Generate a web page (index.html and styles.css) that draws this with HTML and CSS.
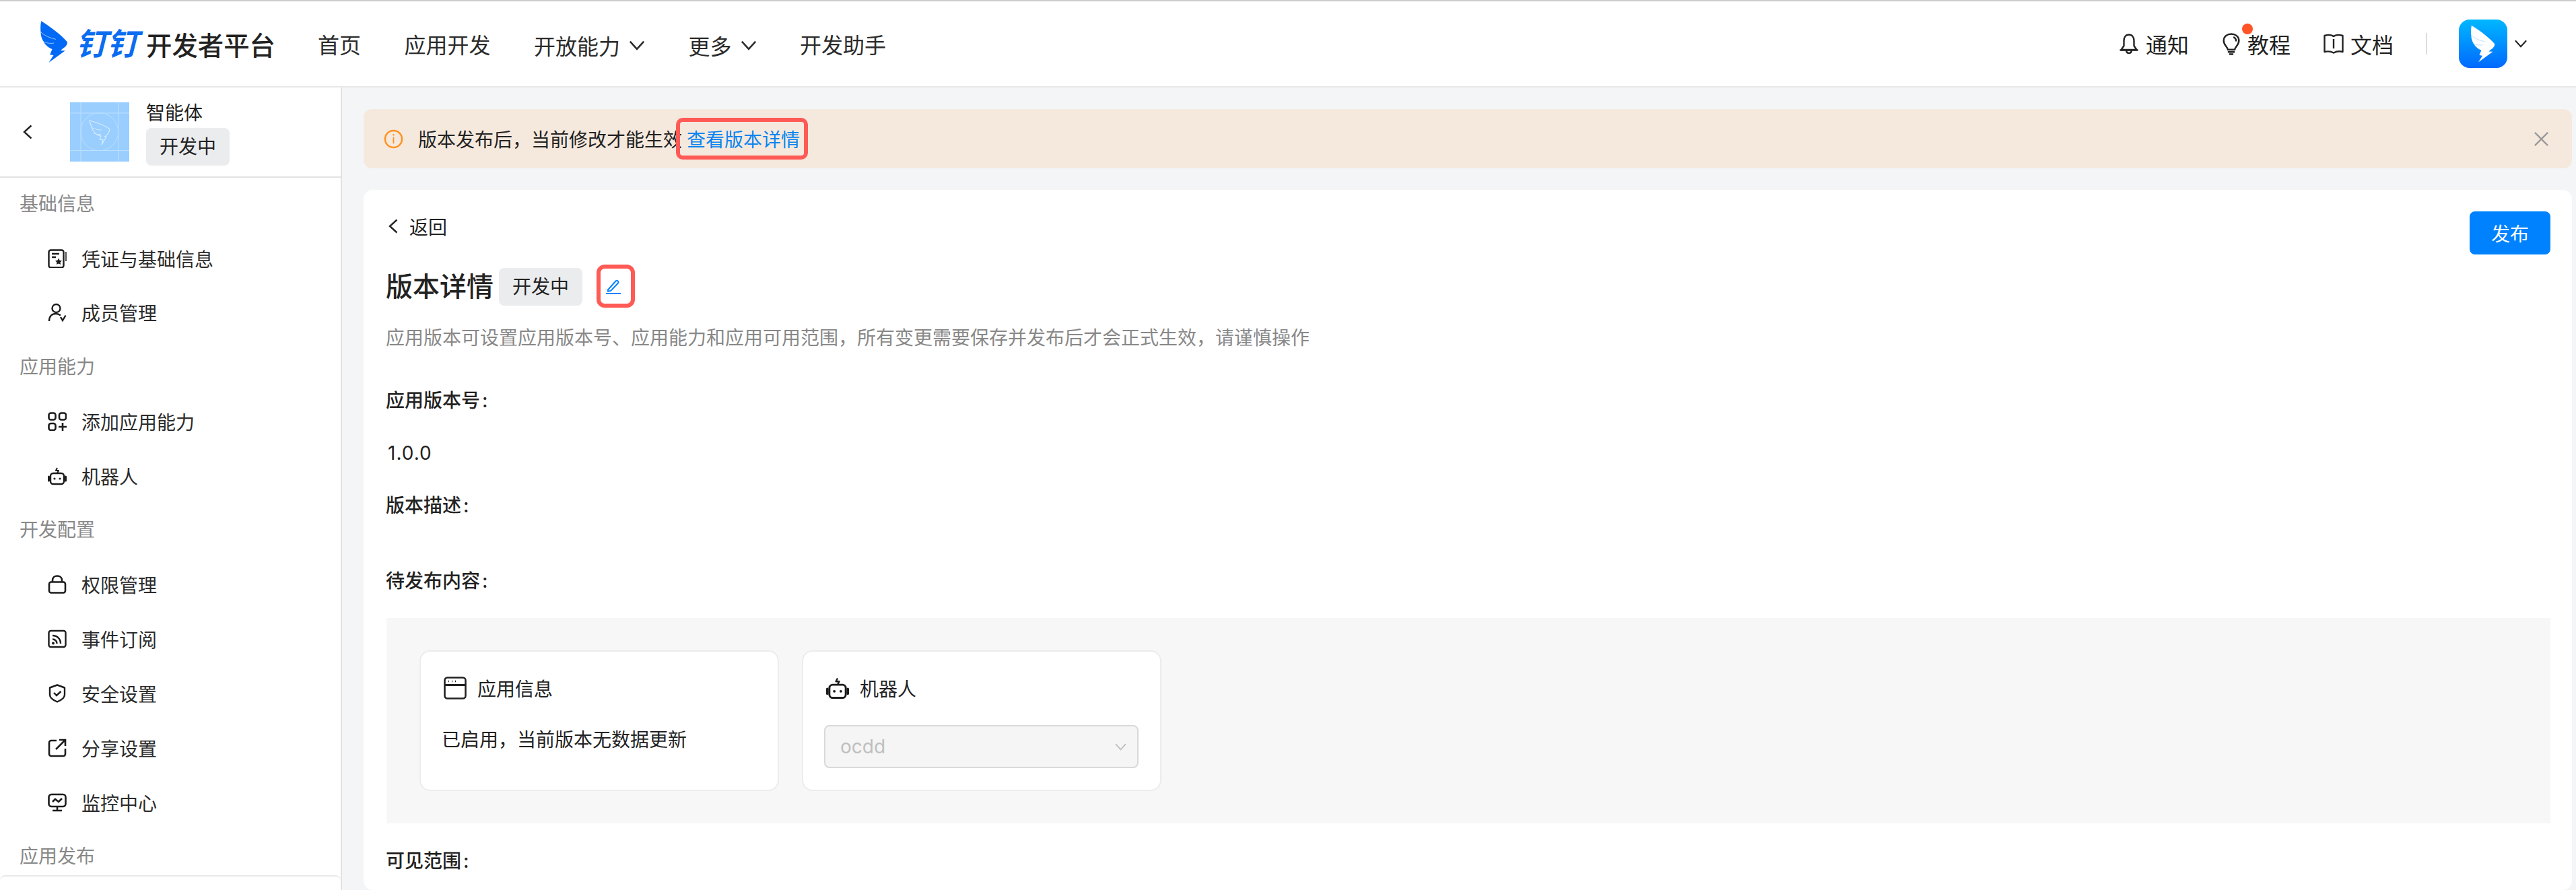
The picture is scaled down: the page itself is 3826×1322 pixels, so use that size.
FILE: index.html
```html
<!DOCTYPE html>
<html lang="zh-CN">
<head>
  <meta charset="UTF-8">
  <title>钉钉开发者平台 - 版本详情</title>
  <link rel="stylesheet" href="styles.css">
</head>
<body>
  <svg class="defs" aria-hidden="true">
    <symbol id="wing" viewBox="0 0 122 186">
      <path d="M3 1C40 24 90 60 120 95C119 106 112 116 101 122L89 132L110 133L37 186L58 153L42 151L52 126C34 119 18 104 12 90C6 80 1 66 1 50C-1 33 0 16 3 1Z"/>
      <path d="M1 50C20 67 45 77 68 82M9 90C24 99 42 102 60 99" fill="none" stroke="var(--slit)" stroke-width="1.800"/>
    </symbol>
    <symbol id="robot" viewBox="0 0 28 28" fill="none">
      <path d="M14 2l-2 4h4l-2 4" stroke="currentColor" stroke-width="2" stroke-linejoin="round"/>
      <rect x="4" y="10" width="20" height="16" rx="4" stroke="currentColor" stroke-width="2.4"/>
      <circle cx="10" cy="18" r="1.6" fill="currentColor"/>
      <circle cx="18" cy="18" r="1.6" fill="currentColor"/>
      <path d="M1.5 15v6M26.5 15v6" stroke="currentColor" stroke-width="3" stroke-linecap="round"/>
    </symbol>
    <symbol id="chevron" viewBox="0 0 22 14" fill="none">
      <path d="M1.5 1.5L11 12L20.5 1.5" stroke="currentColor" stroke-width="2.4"/>
    </symbol>
  </svg>

  <header class="topbar">
    <div class="brand">
      <svg class="brand-wing"><use href="#wing"/></svg>
      <span class="brand-mark">钉钉</span>
      <span class="brand-name">开发者平台</span>
    </div>
    <nav class="topnav">
      <a class="topnav-item">首页</a>
      <a class="topnav-item">应用开发</a>
      <a class="topnav-item topnav-drop">开放能力<svg class="chevron"><use href="#chevron"/></svg></a>
      <a class="topnav-item topnav-drop">更多<svg class="chevron"><use href="#chevron"/></svg></a>
      <a class="topnav-item">开发助手</a>
    </nav>
    <div class="toolbar">
      <a class="tool tool-bell">
        <svg class="tool-icon" viewBox="0 0 30 30" fill="none" stroke="currentColor" stroke-width="2.4">
          <path d="M15 1.500c-5 0-7.500 4-7.500 9v7.500L3.500 24h23l-4-6v-7.500c0-5-2.500-9-7.500-9z" stroke-linejoin="round"/>
          <path d="M1.500 24.500h27M11 25c.5 3 2 4 4 4s3.500-1 4-4"/>
        </svg>通知
      </a>
      <a class="tool tool-bulb">
        <svg class="tool-icon" viewBox="0 0 26 32" fill="none" stroke="currentColor" stroke-width="2.400">
          <path d="M8 24c0-4-6-6-6-13C2 5 7 1.500 13 1.500S24 5 24 11c0 7-6 9-6 13z" stroke-linejoin="round"/>
          <path d="M16 6c3 1 4 3 4 6M8 27.500h10M10 30.500h6"/>
        </svg>教程<i class="dot"></i>
      </a>
      <a class="tool tool-book">
        <svg class="tool-icon" viewBox="0 0 30 30" fill="none" stroke="currentColor" stroke-width="2.400">
          <path d="M15 4C12 1.500 6 1.500 1.500 3v24c4-1 9-1 13.500 1.500C19.500 26 25 26 28.500 27V3C24 1.500 18 1.500 15 4z" stroke-linejoin="round"/>
          <path d="M15 8v14"/>
        </svg>文档
      </a>
      <span class="tool-sep"></span>
      <span class="avatar"><svg class="avatar-wing"><use href="#wing"/></svg></span>
      <svg class="chevron chevron-user"><use href="#chevron"/></svg>
    </div>
  </header>

  <div class="layout">
    <aside class="sidebar">
      <div class="app-head">
        <svg class="app-back" viewBox="0 0 14 22" fill="none" stroke="currentColor" stroke-width="2.400"><path d="M12.500 1.500L2 11l10.500 9.500"/></svg>
        <svg class="app-logo" viewBox="0 0 88 88">
          <rect width="88" height="88" fill="#99ceff"/>
          <path d="M0 16h88M0 71.500h88M16 0v88M71.500 0v88" stroke="#bde0ff" stroke-width="1"/>
          <circle cx="43.700" cy="43.700" r="28" fill="none" stroke="#bde0ff" stroke-width="1"/>
          <path d="M29 27C40 30 52 34 59 40C58 45 55 49 51 51L54 51L47 63L49 56L44 55L46 50C38 49 33 42 32 36C31 33 29 30 29 27Z" fill="none" stroke="#d6ecff" stroke-width="1.200"/>
          <path d="M32 37C38 41 44 41 47 41M36 46C40 48 44 48 46 47" fill="none" stroke="#d6ecff" stroke-width="1"/>
        </svg>
        <div class="app-meta">
          <div class="app-name">智能体</div>
          <span class="tag">开发中</span>
        </div>
      </div>
      <div class="side-nav">
        <div class="side-title">基础信息</div>
        <a class="side-item">
          <svg class="side-icon" viewBox="0 0 28 28" fill="none" stroke="currentColor" stroke-width="2.400">
            <rect x="1.500" y="1.500" width="22" height="26" rx="3"/>
            <path d="M6 7h11M6 12h6"/>
            <path d="M16 13.500l1.600 3.300 3.400.5-2.500 2.400.6 3.400-3.100-1.600-3.100 1.600.6-3.400L11 17.300l3.400-.5z" fill="currentColor" stroke="none"/>
            <path d="M27 4v14" stroke-width="1.500"/>
          </svg>凭证与基础信息
        </a>
        <a class="side-item">
          <svg class="side-icon" viewBox="0 0 28 28" fill="none" stroke="currentColor" stroke-width="2.400">
            <circle cx="12.500" cy="8" r="6"/>
            <path d="M2 27c0-7 4-11 10-11 3 0 5 1 7 2.500M19 21l3 5 4.500-7.500"/>
          </svg>成员管理
        </a>
        <div class="side-title">应用能力</div>
        <a class="side-item">
          <svg class="side-icon" viewBox="0 0 28 28" fill="none" stroke="currentColor" stroke-width="2.600">
            <rect x="1.500" y="1.500" width="10" height="10" rx="3"/>
            <rect x="17" y="1.500" width="10" height="10" rx="3"/>
            <rect x="1.500" y="17" width="10" height="10" rx="3"/>
            <path d="M22 16v12M16 22h12"/>
          </svg>添加应用能力
        </a>
        <a class="side-item">
          <svg class="side-icon"><use href="#robot"/></svg>机器人
        </a>
        <div class="side-title">开发配置</div>
        <a class="side-item">
          <svg class="side-icon" viewBox="0 0 28 28" fill="none" stroke="currentColor" stroke-width="2.600">
            <rect x="2" y="10.500" width="24" height="16" rx="3"/>
            <path d="M7 10.500V8c0-4 3-6.500 7-6.500s7 2.500 7 6.500v2.500"/>
          </svg>权限管理
        </a>
        <a class="side-item">
          <svg class="side-icon" viewBox="0 0 28 28" fill="none" stroke="currentColor" stroke-width="2.400">
            <rect x="1.500" y="2" width="25" height="24" rx="3"/>
            <path d="M7 9c7 0 12 5 12 12M7 14.500c4 0 6.500 3 6.500 6.500"/>
            <circle cx="8" cy="20.500" r="2" fill="currentColor" stroke="none"/>
          </svg>事件订阅
        </a>
        <a class="side-item">
          <svg class="side-icon" viewBox="0 0 28 28" fill="none" stroke="currentColor" stroke-width="2.400">
            <path d="M14 1.500l11 4v10.500c0 4-5 8-11 10.500C8 24 3 20 3 16V5.500z" stroke-linejoin="round"/>
            <path d="M9 13l4 4 6.500-6"/>
          </svg>安全设置
        </a>
        <a class="side-item">
          <svg class="side-icon" viewBox="0 0 28 28" fill="none" stroke="currentColor" stroke-width="2.600">
            <path d="M13 3H5a3 3 0 0 0-3 3v17a3 3 0 0 0 3 3h18a3 3 0 0 0 3-3v-8"/>
            <path d="M12 16L25 3M17 2h9v9"/>
          </svg>分享设置
        </a>
        <a class="side-item">
          <svg class="side-icon" viewBox="0 0 28 28" fill="none" stroke="currentColor" stroke-width="2.600">
            <rect x="1.500" y="2" width="25" height="18" rx="4"/>
            <path d="M7 13l4-4 5 4 5-5M14 20v5M7 26h14"/>
          </svg>监控中心
        </a>
        <div class="side-title">应用发布</div>
      </div>
      <div class="side-foot"></div>
    </aside>

    <main class="content">
      <div class="alert">
        <svg class="alert-icon" viewBox="0 0 30 30" fill="none" stroke="#ff9222" stroke-width="2.600">
          <circle cx="15" cy="15" r="13"/>
          <path d="M15 12v10" stroke-width="1.800"/>
          <circle cx="15" cy="8.500" r="1.300" fill="#ff9222" stroke="none"/>
        </svg>
        <span>版本发布后&#xFF0C;当前修改才能生效</span>
        <a class="alert-link">查看版本详情</a>
        <svg class="alert-close" viewBox="0 0 24 24" fill="none" stroke="#999" stroke-width="2.400"><path d="M2 2l20 20M22 2L2 22"/></svg>
      </div>

      <section class="card">
        <div class="card-top">
          <a class="back">
            <svg class="back-icon" viewBox="0 0 14 22" fill="none" stroke="currentColor" stroke-width="2.400"><path d="M12.500 1.500L2 11l10.500 9.500"/></svg>返回
          </a>
          <button class="btn-primary">发布</button>
        </div>
        <div class="title-row">
          <h1 class="page-title">版本详情</h1>
          <span class="tag">开发中</span>
          <a class="edit">
            <svg class="edit-icon" viewBox="0 0 22 22" fill="none" stroke="#0a84ff" stroke-width="2">
              <path d="M3 15.500L14.500 2.500c1-1 2.200-1 3.200 0 1 1 1 2 .3 3L7 17l-4.200.8z" stroke-linejoin="round"/>
              <path d="M0 21h22"/>
            </svg>
          </a>
        </div>
        <p class="desc">应用版本可设置应用版本号、应用能力和应用可用范围&#xFF0C;所有变更需要保存并发布后才会正式生效&#xFF0C;请谨慎操作</p>

        <div class="field-label field-first">应用版本号<span class="colon">:</span></div>
        <div class="field-value">1.0.0</div>
        <div class="field-label">版本描述<span class="colon">:</span></div>
        <div class="field-label field-pending">待发布内容<span class="colon">:</span></div>

        <div class="pending">
          <div class="pending-card">
            <div class="pending-title">
              <svg class="pending-icon" viewBox="0 0 34 34" fill="none" stroke="#222" stroke-width="2.600">
                <rect x="1.500" y="1.500" width="31" height="31" rx="4"/>
                <path d="M1.500 12.500h31" stroke-width="3"/>
                <path d="M7 7h1M12 7h1M17 7h1" stroke-width="2.400"/>
              </svg>应用信息
            </div>
            <div class="pending-text">已启用&#xFF0C;当前版本无数据更新</div>
          </div>
          <div class="pending-card">
            <div class="pending-title">
              <svg class="pending-icon"><use href="#robot"/></svg>机器人
            </div>
            <div class="select-box">
              <span>ocdd</span>
              <svg class="chevron chevron-select"><use href="#chevron"/></svg>
            </div>
          </div>
        </div>

        <div class="field-label field-scope">可见范围<span class="colon">:</span></div>
      </section>
    </main>
  </div>
</body>
</html>
```

FILE: styles.css
```css
/* Page */
html, body {
  margin: 0;
  padding: 0;
}
body {
  width: 3826px;
  height: 1322px;
  overflow: hidden;
  background-color: #f4f5f7;
  color: #222;
  font-family: Inter, "Noto Sans CJK SC", sans-serif;
  font-size: 28px;
}
a {
  color: inherit;
  text-decoration: none;
}
.defs {
  display: none;
}
.chevron {
  width: 24px;
  height: 15px;
  flex: none;
}

/* Top bar */
.topbar {
  display: flex;
  align-items: center;
  height: 126px;
  padding-left: 60px;
  background-color: #fff;
  border-top: 2px solid #ccc;
  border-bottom: 2px solid #e8e8e8;
  font-size: 32px;
}
.brand {
  display: flex;
  align-items: center;
}
.brand-wing {
  --slit: #fff;
  width: 41px;
  height: 62px;
  fill: #0069f5;
  margin-top: -6px;
}
.brand-mark {
  margin-left: 12px;
  color: #0a6cf0;
  font-size: 46px;
  font-weight: 700;
  font-style: italic;
  line-height: 1;
}
.brand-name {
  margin-left: 12px;
  font-size: 38.4px;
  font-weight: 500;
}
.topnav {
  display: flex;
  gap: 64.5px;
  margin-left: 63px;
}
.topnav-item {
  display: flex;
  align-items: center;
  color: #2b2b2b;
}
.topnav-drop {
  margin-top: 4px;
}
.topnav-drop .chevron {
  margin-left: 13px;
}
.toolbar {
  display: flex;
  align-items: center;
  margin-left: auto;
  padding-right: 72px;
}
.tool {
  display: flex;
  align-items: center;
  position: relative;
}
.tool-icon {
  flex: none;
  margin-right: 10px;
}
.tool-bell .tool-icon {
  width: 30px;
  height: 30px;
}
.tool-bulb {
  margin-left: 49px;
}
.tool-bulb .tool-icon {
  width: 28px;
  height: 33px;
}
.tool-book {
  margin-left: 48px;
}
.tool-book .tool-icon {
  width: 32px;
  height: 30px;
  margin-right: 9px;
}
.dot {
  position: absolute;
  left: 30px;
  top: -7px;
  width: 16px;
  height: 16px;
  border-radius: 50%;
  background-color: #ff5426;
}
.tool-sep {
  width: 2px;
  height: 32px;
  margin-left: 48px;
  background-color: #ddd;
}
.avatar {
  display: flex;
  align-items: center;
  justify-content: center;
  width: 72px;
  height: 72px;
  margin-left: 47px;
  border-radius: 16px;
  background: linear-gradient(180deg, #00b7ff, #0069ff);
}
.avatar-wing {
  --slit: #7fc4ff;
  width: 36px;
  height: 56px;
  fill: #fff;
}
.chevron-user {
  width: 20px;
  height: 12px;
  margin-left: 10px;
}

/* Main layout */
.layout {
  display: flex;
  height: 1192px;
  overflow: hidden;
}
.sidebar {
  display: flex;
  flex-direction: column;
  flex: none;
  width: 506px;
  background-color: #fff;
  border-right: 2px solid #dfe1e4;
}
.app-head {
  display: flex;
  align-items: flex-start;
  flex: none;
  box-sizing: border-box;
  height: 134px;
  padding: 22px 0 0 34px;
  border-bottom: 2px solid #e3e3e3;
}
.app-back {
  width: 14px;
  height: 22px;
  margin-top: 33px;
}
.app-logo {
  width: 88px;
  height: 88px;
  margin-left: 56px;
}
.app-meta {
  margin-left: 25px;
}
.app-name {
  height: 38px;
  line-height: 33px;
}
.tag {
  display: inline-block;
  width: 124px;
  height: 56px;
  border-radius: 8px;
  background-color: #ebecee;
  text-align: center;
  line-height: 56px;
}
.side-nav {
  flex: 1;
  margin-top: -1.5px;
  overflow: hidden;
}
.side-title {
  height: 80.8px;
  padding-left: 29px;
  color: #888;
  line-height: 81.5px;
}
.side-item {
  display: flex;
  align-items: center;
  height: 80.8px;
  padding-left: 71px;
  color: #2b2b2b;
}
.side-icon {
  flex: none;
  width: 28px;
  height: 28px;
  margin-right: 22px;
  color: #1c1c1c;
}
.side-foot {
  flex: none;
  height: 20px;
  border-top: 2px solid #e8e8e8;
  border-radius: 8px 8px 0 0;
}

/* Content */
.content {
  flex: 1;
  min-width: 0;
  padding: 32px 6px 0 32px;
}
.alert {
  display: flex;
  align-items: center;
  height: 88px;
  padding-left: 30px;
  border-radius: 12px;
  background-color: #f5e9de;
}
.alert-icon {
  width: 29px;
  height: 29px;
  margin-right: 22px;
}
.alert-link {
  position: relative;
  margin-left: 7px;
  color: #0a84f0;
}
.alert-link::after {
  content: "";
  position: absolute;
  left: -16px;
  right: -12px;
  top: -11px;
  bottom: -11px;
  border: 6px solid #ff5a55;
  border-radius: 10px;
}
.alert-close {
  width: 23px;
  height: 23px;
  margin-left: auto;
  margin-right: 34px;
}

.card {
  height: 1040px;
  margin-top: 32px;
  padding: 32px 32px 0 33px;
  box-sizing: border-box;
  border-radius: 14px;
  background-color: #fff;
}
.card-top {
  display: flex;
  justify-content: space-between;
  align-items: flex-start;
  height: 64px;
}
.back {
  display: flex;
  align-items: center;
  height: 44px;
}
.back-icon {
  width: 14px;
  height: 22px;
  margin-left: 4px;
  margin-right: 17px;
}
.btn-primary {
  width: 120px;
  height: 64px;
  padding: 0;
  border: none;
  border-radius: 8px;
  background-color: #0082ff;
  color: #fff;
  font-family: inherit;
  font-size: 28px;
}
.title-row {
  display: flex;
  align-items: center;
  height: 56px;
  margin-top: 20px;
}
.page-title {
  margin: 0 8px 0 0;
  font-size: 40px;
  font-weight: 500;
  line-height: 48px;
}
.edit {
  position: relative;
  display: flex;
  margin-left: 35px;
}
.edit::after {
  content: "";
  position: absolute;
  left: -14px;
  top: -22px;
  width: 45px;
  height: 52px;
  border: 6px solid #ff5a55;
  border-radius: 12px;
}
.edit-icon {
  width: 22px;
  height: 22px;
}
.desc {
  margin: 28px 0 0;
  color: #888;
  line-height: 40px;
}
.field-label {
  margin-top: 38px;
  font-weight: 500;
  line-height: 40px;
}
.colon {
  margin-left: 3px;
}
.field-first {
  margin-top: 53px;
}
.field-pending {
  margin-top: 72px;
}
.field-scope {
  margin-top: 36px;
}
.field-value {
  margin-top: 38px;
  padding-left: 3px;
  letter-spacing: 1px;
  line-height: 40px;
}

/* Pending release cards */
.pending {
  display: flex;
  gap: 34px;
  box-sizing: border-box;
  height: 305px;
  margin: 35px 0 0 1px;
  padding: 48px 0 0 49px;
  background-color: #f7f7f7;
}
.pending-card {
  box-sizing: border-box;
  width: 534px;
  height: 209px;
  padding: 34px 31px 0;
  border: 2px solid #ececec;
  border-radius: 16px;
  background-color: #fff;
}
.pending-title {
  display: flex;
  align-items: center;
  height: 40px;
}
.pending-icon {
  width: 34px;
  height: 34px;
  margin-left: 3px;
  margin-right: 16px;
  color: #1c1c1c;
}
.pending-text {
  margin-top: 37px;
  line-height: 40px;
}
.select-box {
  display: flex;
  align-items: center;
  justify-content: space-between;
  box-sizing: border-box;
  width: 467px;
  height: 64px;
  margin-top: 35px;
  padding: 0 15px 0 22px;
  border: 2px solid #d9d9d9;
  border-radius: 8px;
  background-color: #f5f5f5;
  color: #bfbfbf;
}
.chevron-select {
  width: 19px;
  height: 11px;
  color: #bfbfbf;
}
```
